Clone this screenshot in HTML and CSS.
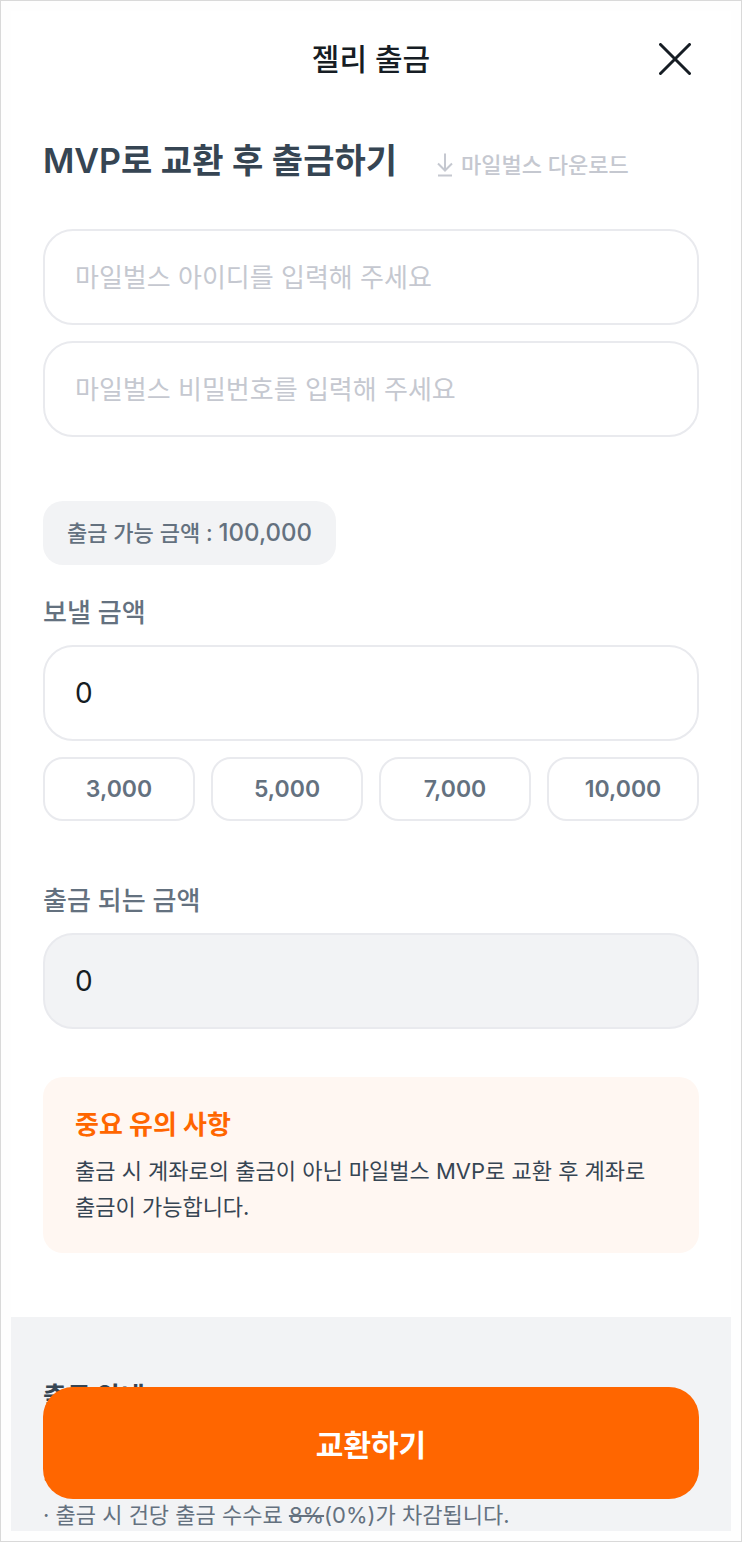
FILE: index.html
```html
<!DOCTYPE html>
<html lang="ko">
<head>
    <meta charset="UTF-8">
    <meta name="viewport" content="width=device-width, initial-scale=1.0">
    <title>젤리 출금</title>
    <link rel="stylesheet" href="styles.css">
</head>
<body>

    <div class="frame">
        <main class="screen">
            <header class="header">
                <h1 class="header-title">젤리 출금</h1>
                <button type="button" class="close" aria-label="닫기">
                    <svg width="32" height="32" viewBox="0 0 32 32" fill="none" stroke="currentColor" stroke-width="3" stroke-linecap="round">
                        <path d="M1.5 1.5L30.5 30.5M30.5 1.5L1.5 30.5"/>
                    </svg>
                </button>
            </header>

            <form class="content" id="withdrawForm">
                <div class="title-row">
                    <h2 class="title">MVP로 교환 후 출금하기</h2>
                    <a class="download" href="#">
                        <svg width="16" height="24" viewBox="0 0 16 24" fill="none" stroke="currentColor" stroke-width="2">
                            <path d="M8 0.5V17M1 10.5L8 17.5L15 10.5M1 22.5H15"/>
                        </svg>
                        마일벌스 다운로드
                    </a>
                </div>

                <div class="account">
                    <input class="field" type="text" aria-label="마일벌스 아이디" placeholder="마일벌스 아이디를 입력해 주세요">
                    <input class="field" type="password" aria-label="마일벌스 비밀번호" placeholder="마일벌스 비밀번호를 입력해 주세요">
                </div>

                <p class="balance">출금 가능 금액 : <span class="balance-amount">100,000</span></p>

                <label class="label" for="sendAmount">보낼 금액</label>
                <input class="field amount" type="text" inputmode="numeric" id="sendAmount" value="0">
                <div class="quick">
                    <button type="button" class="quick-btn">3,000</button>
                    <button type="button" class="quick-btn">5,000</button>
                    <button type="button" class="quick-btn">7,000</button>
                    <button type="button" class="quick-btn">10,000</button>
                </div>

                <label class="label label-result" for="resultAmount">출금 되는 금액</label>
                <input class="field amount readonly" type="text" id="resultAmount" value="0" readonly>

                <section class="notice">
                    <h3 class="notice-title">중요 유의 사항</h3>
                    <p class="notice-text">출금 시 계좌로의 출금이 아닌 마일벌스 MVP로 교환 후 계좌로 출금이 가능합니다.</p>
                </section>
            </form>

            <section class="guide">
                <h3 class="guide-title">출금 안내</h3>
                <ul class="guide-list">
                    <li>출금은 MVP로 교환 후 가능합니다.</li>
                    <li>출금 시 건당 출금 수수료 <s>8%</s>(0%)가 차감됩니다.</li>
                </ul>
            </section>

            <button type="submit" form="withdrawForm" class="submit">교환하기</button>
        </main>
    </div>

</body>
</html>
```
FILE: styles.css
```css
* {
    box-sizing: border-box;
}
body {
    margin: 0;
    background: #fff;
    color: #161d24;
    font-family: Inter, "Noto Sans CJK KR", sans-serif;
}
h1, h2, h3, p, ul {
    margin: 0;
    padding: 0;
}
button, input {
    font-family: inherit;
}
button {
    padding: 0;
    cursor: pointer;
}
.frame {
    height: 100vh;
    padding: 10px;
    border: 1px solid #d9d9d9;
    background: #fefefe;
}
.screen {
    position: relative;
    height: 100%;
    overflow: hidden;
    background: #fff;
}

/* header */
.header {
    display: grid;
    grid-template-columns: 48px 1fr 48px;
    align-items: center;
    height: 96px;
    padding: 0 32px;
}
.header-title {
    grid-column: 2;
    font-size: 30px;
    font-weight: 500;
    line-height: 48px;
    text-align: center;
}
.close {
    display: flex;
    align-items: center;
    justify-content: center;
    height: 48px;
    border: none;
    background: none;
    color: #161d24;
}

/* form */
.content {
    padding: 32px 32px 64px;
}
.title-row {
    display: flex;
    align-items: center;
    gap: 40px;
    height: 44px;
}
.title {
    color: #364553;
    font-size: 34px;
    font-weight: 600;
    line-height: 44px;
    white-space: nowrap;
}
.download {
    display: flex;
    align-items: center;
    gap: 8px;
    padding-top: 8px;
    color: #c5c8d0;
    font-size: 22px;
    font-weight: 500;
    line-height: 36px;
    text-decoration: none;
    white-space: nowrap;
}
.account {
    display: grid;
    gap: 16px;
    margin: 46px 0 64px;
}
.field {
    display: block;
    width: 100%;
    height: 96px;
    padding: 0 30px;
    border: 2px solid #e9eaee;
    border-radius: 30px;
    background: #fff;
    color: #161d24;
    font-size: 26px;
    outline: none;
}
.field::placeholder {
    color: #c5c8d0;
    opacity: 1;
}
.amount {
    font-size: 28px;
}
.readonly {
    background: #f2f3f5;
}
.balance {
    width: fit-content;
    height: 64px;
    padding: 14px 24px;
    border-radius: 20px;
    background: #f2f3f5;
    color: #64717f;
    font-size: 22px;
    font-weight: 500;
    line-height: 36px;
}
.balance-amount {
    font-size: 24px;
}
.label {
    display: block;
    height: 40px;
    margin: 28px 0 12px;
    color: #64717f;
    font-size: 26px;
    font-weight: 500;
    line-height: 40px;
}
.label-result {
    margin-top: 60px;
}
.quick {
    display: grid;
    grid-template-columns: repeat(4, 1fr);
    gap: 16px;
    margin-top: 16px;
}
.quick-btn {
    height: 64px;
    border: 2px solid #e9eaee;
    border-radius: 20px;
    background: #fff;
    color: #64717f;
    font-size: 23px;
    font-weight: 600;
}

/* notice */
.notice {
    margin-top: 48px;
    padding: 28px 32px;
    border-radius: 20px;
    background: #fff7f2;
}
.notice-title {
    margin-bottom: 8px;
    color: #ff6600;
    font-size: 26px;
    font-weight: 700;
    line-height: 40px;
}
.notice-text {
    color: #364553;
    font-size: 22px;
    line-height: 36px;
    word-break: keep-all;
}

/* guide */
.guide {
    padding: 64px 32px 144px;
    background: #f2f3f5;
}
.guide-title {
    margin-bottom: 48px;
    color: #364553;
    font-size: 26px;
    font-weight: 700;
    line-height: 32px;
}
.guide-list {
    color: #64717f;
    font-size: 22px;
    line-height: 36px;
    list-style: none;
}
.guide-list li::before {
    content: "· ";
}

.submit {
    position: absolute;
    right: 32px;
    bottom: 32px;
    left: 32px;
    height: 112px;
    border: none;
    border-radius: 30px;
    background: #ff6600;
    color: #fff;
    font-size: 30px;
    font-weight: 700;
}
```
